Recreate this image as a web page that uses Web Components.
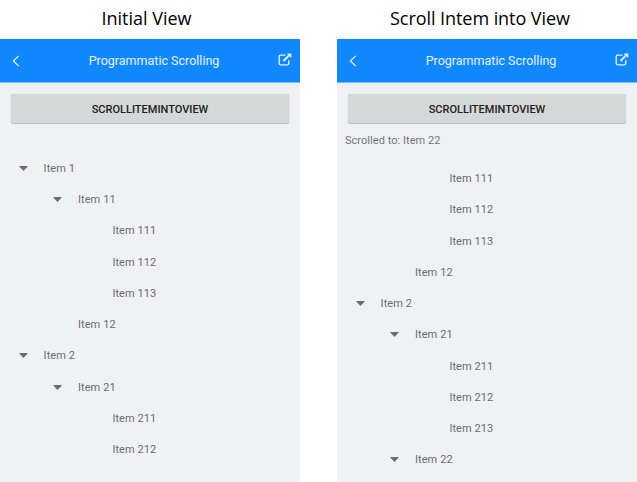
<!DOCTYPE html>
<html lang="en"><head><meta charset="utf-8"><title>Programmatic Scrolling</title>
<style>
html,body{margin:0;height:100%;overflow:hidden;background:#fff}
</style></head><body>
<scroll-comparison></scroll-comparison>
<script>
const define=(name,html)=>customElements.define(name,class extends HTMLElement{
  constructor(){super();const t=document.createElement('template');t.innerHTML=html;
    this.attachShadow({mode:'open'}).append(t.content.cloneNode(true));}
});

define('app-bar',`<style>
:host{display:grid;grid-template-columns:34px 1fr 26px;align-items:center;box-sizing:border-box;height:44px;flex:none;background:#1188ff;border-bottom:1px solid #75b9fc;color:#e4f1ff;font:400 12.5px Roboto,sans-serif}
span{text-align:center;white-space:nowrap}
svg{display:block;fill:none;stroke:#e9f4ff}
.back{margin-left:12px}.out{margin:-2px 0 0 3.5px}
</style>
<svg class="back" width="8" height="12" viewBox="0 0 8 12" stroke-width="1.2"><path d="M6.7.9 1.4 6l5.3 5.1"/></svg>
<span><slot></slot></span>
<svg class="out" width="14" height="13" viewBox="0 0 14 13"><path stroke-width="1.3" d="M7.5 2.2H2.7Q1.2 2.2 1.2 3.7v6.6q0 1.5 1.5 1.5h6.6q1.5 0 1.5-1.5V7.2"/><path stroke-width="1.9" d="M5.5 8 11.3 2.2"/><path fill="#e9f4ff" stroke="none" d="M8.6.4H13.3V5.1z"/></svg>`);

define('raised-button',`<style>
:host{display:flex;align-items:center;justify-content:center;flex:none;height:29px;margin:11px 11px 1px 11px;border-radius:2px;background:#d6d8d7;box-shadow:0 1px 1px #0003,0 0 1px #0003;color:#202121;font:500 11px Roboto,sans-serif}
span{padding-top:1px}
</style><span><slot></slot></span>`);

define('status-line',`<style>
:host{display:block;flex:none;box-sizing:border-box;height:29px;padding:9px 8px 0;font:400 11px/15px Roboto,sans-serif;letter-spacing:.04px;color:#747475}
</style><slot></slot>`);

define('tree-view',`<style>
:host{display:flex;flex-direction:column;min-height:0;overflow:hidden}
</style><slot></slot>`);

customElements.define('tree-item',class extends HTMLElement{
  connectedCallback(){
    if(this.shadowRoot)return;
    this.attachShadow({mode:'open'}).innerHTML=`<style>
:host{display:flex;align-items:center;flex:none;height:31.25px;padding-left:calc(19px + ${this.getAttribute('level')} * 34.4px);font:400 11px Roboto,sans-serif;letter-spacing:.07px;color:#6c6c6d}
i{width:24.6px;flex:none}svg{display:block}
</style><i>${this.hasAttribute('open')?'<svg width="9" height="5" viewBox="0 0 9 5"><path fill="#6c6c6d" d="M.8 0h7.4q.8.2.3.8L5 4.6q-.5.5-1 0L.5.8Q0 .2.8 0z"/></svg>':''}</i><slot></slot>`;
  }
});

define('phone-view',`<style>
:host{display:flex;flex-direction:column;width:300px;height:482px;overflow:hidden}
h2{margin:0;flex:none;height:39px;text-align:center;font:400 18px/36px "Open Sans","Noto Sans",sans-serif;letter-spacing:var(--caption-spacing);padding-right:var(--caption-shift);color:#000}
section{display:flex;flex-direction:column;flex:1;min-height:0;background:#f0f1f5}
</style><h2><slot name="caption"></slot></h2><section><app-bar>Programmatic Scrolling</app-bar><raised-button>SCROLLITEMINTOVIEW</raised-button><slot></slot></section>`);

define('scroll-comparison',`<style>
:host{display:grid;grid-template-columns:300px 300px;column-gap:37px;width:637px;height:482px}
.start{--caption-spacing:0;--caption-shift:7px}
.scrolled{--caption-spacing:-.06px;--caption-shift:14px}
.start tree-view{margin-top:-.25px}
</style>
<phone-view class="start"><span slot="caption">Initial View</span><status-line></status-line><tree-view>
<tree-item level="0" open>Item 1</tree-item><tree-item level="1" open>Item 11</tree-item><tree-item level="2">Item 111</tree-item><tree-item level="2">Item 112</tree-item><tree-item level="2">Item 113</tree-item><tree-item level="1">Item 12</tree-item><tree-item level="0" open>Item 2</tree-item><tree-item level="1" open>Item 21</tree-item><tree-item level="2">Item 211</tree-item><tree-item level="2">Item 212</tree-item>
</tree-view></phone-view>
<phone-view class="scrolled"><span slot="caption">Scroll Intem into View</span><status-line>Scrolled to: Item 22</status-line><tree-view style="margin-top:10px">
<tree-item level="2">Item 111</tree-item><tree-item level="2">Item 112</tree-item><tree-item level="2">Item 113</tree-item><tree-item level="1">Item 12</tree-item><tree-item level="0" open>Item 2</tree-item><tree-item level="1" open>Item 21</tree-item><tree-item level="2">Item 211</tree-item><tree-item level="2">Item 212</tree-item><tree-item level="2">Item 213</tree-item><tree-item level="1" open>Item 22</tree-item>
</tree-view></phone-view>`);
</script></body></html>
